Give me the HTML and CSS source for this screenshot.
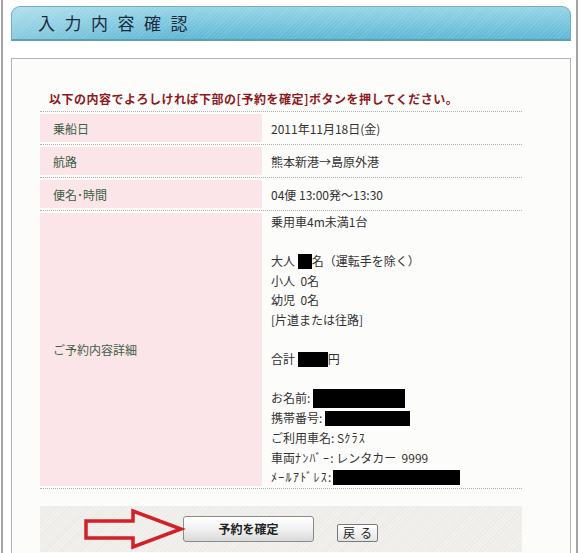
FILE: index.html
```html
<!DOCTYPE html>
<html lang="ja">
<head>
<meta charset="utf-8">
<title>入力内容確認</title>
<link rel="stylesheet" href="styles.css">
</head>
<body>
<div class="frame">
  <h1 class="title-bar">入力内容確認</h1>
  <div class="panel">
    <p class="notice">以下の内容でよろしければ下部の[予約を確定]ボタンを押してください。</p>
    <div class="table">
      <div class="row">
        <div class="lab">乗船日</div>
        <div class="val">2011年11月18日(金)</div>
      </div>
      <div class="row">
        <div class="lab">航路</div>
        <div class="val">熊本新港→島原外港</div>
      </div>
      <div class="row">
        <div class="lab">便名･時間</div>
        <div class="val">04便 13:00発～13:30</div>
      </div>
      <div class="row detail">
        <div class="lab">ご予約内容詳細</div>
        <div class="val lines">
          <div>乗用車4m未満1台</div>
          <div>&nbsp;</div>
          <div>大人 <span class="redact r-adult"></span>名（運転手を除く）</div>
          <div>小人&nbsp; 0名</div>
          <div>幼児&nbsp; 0名</div>
          <div>[片道または往路]</div>
          <div>&nbsp;</div>
          <div>合計 <span class="redact r-total"></span>円</div>
          <div>&nbsp;</div>
          <div>お名前:<span class="redact r-name"></span></div>
          <div>携帯番号:<span class="redact r-tel"></span></div>
          <div>ご利用車名: S<span class="hw">ｸﾗｽ</span></div>
          <div>車両<span class="hw">ﾅﾝﾊﾞｰ</span>: レンタカー&nbsp; 9999</div>
          <div><span class="hw">ﾒｰﾙｱﾄﾞﾚｽ</span>:<span class="redact r-mail"></span></div>
        </div>
      </div>
    </div>
    <div class="actions">
      <button class="btn-main" type="button">予約を確定</button>
      <button class="btn-back" type="button">戻る</button>
      <svg class="arrow" width="104" height="44" viewBox="0 0 104 44">
        <polygon points="3,13 50,13 50,3 98,21 50,39 50,30 3,30" fill="none" stroke="#d41f24" stroke-width="3.5" stroke-linejoin="miter"/>
      </svg>
    </div>
  </div>
</div>
</body>
</html>
```

FILE: styles.css
```css
html, body {
  margin: 0;
  padding: 0;
  background: #ffffff;
}
body {
  font-family: "Noto Sans CJK JP", "Liberation Sans", sans-serif;
  font-size: 12px;
  color: #333;
  overflow: hidden;
}
.frame {
  margin: 0 2px 0 1px;
  border-left: 2px solid #a3a3a3;
  border-right: 2px solid #a3a3a3;
  padding: 6px 5px 0 8px;
  height: 553px;
  box-sizing: border-box;
}
.title-bar {
  margin: 0;
  height: 35px;
  box-sizing: border-box;
  border: 1px solid #74aebe;
  border-bottom: 2px solid #5f9fb2;
  border-radius: 9px 9px 0 0;
  background:
    repeating-linear-gradient(135deg, rgba(255,255,255,0.10) 0 1px, rgba(255,255,255,0) 1px 3px),
    linear-gradient(90deg, rgba(255,255,255,0.25), rgba(255,255,255,0) 30%),
    linear-gradient(180deg, #98d4e6 0%, #7dc8df 45%, #5fb7d4 100%);
  padding-left: 26px;
  font-size: 17px;
  font-weight: normal;
  letter-spacing: 9.5px;
  line-height: 32px;
  color: #1c2a40;
}
.panel {
  position: relative;
  margin-top: 17px;
  border: 1px solid #b4b4b4;
  background: #fcfcfa;
  padding: 32px 48px 0 28px;
  height: 520px;
  box-sizing: border-box;
}
.notice {
  margin: 0 0 4px 9px;
  font-size: 12px;
  line-height: 16px;
  font-weight: bold;
  letter-spacing: 0.5px;
  color: #8c1a1e;
}
.table {
  border-top: 1px dotted #b0b0b0;
}
.row {
  display: grid;
  grid-template-columns: 222px 1fr;
  border-bottom: 1px dotted #b0b0b0;
  padding: 2px 0;
}
.lab {
  background: #fbe5e8;
  height: 28px;
  display: flex;
  align-items: center;
  padding-left: 13px;
  color: #3d5e49;
}
.val {
  display: flex;
  align-items: center;
  padding-left: 9px;
  color: #333;
}
.detail .lab {
  height: auto;
}
.detail .val.lines {
  display: block;
  line-height: 19.6px;
  margin-top: -1px;
  margin-bottom: -1px;
}
.hw {
  letter-spacing: 1.3px;
}
.redact {
  display: inline-block;
  background: #000;
  height: 15px;
  vertical-align: -3px;
}
.r-adult { width: 14px; margin-left: 0; }
.r-total { width: 30px; }
.r-name { width: 92px; height: 19px; vertical-align: -5px; margin-left: 3px; }
.r-tel { width: 85px; margin-left: 3px; }
.r-mail { width: 127px; margin-left: 2px; }
.actions {
  position: relative;
  margin-top: 17px;
  height: 46px;
  display: flex;
  align-items: flex-start;
  padding: 10px 0 0 143px;
  box-sizing: border-box;
  gap: 23px;
  background:
    repeating-linear-gradient(135deg, rgba(0,0,0,0.025) 0 1px, rgba(0,0,0,0) 1px 3px),
    #f1f0ed;
}
.btn-main {
  width: 131px;
  height: 26px;
  border: 1px solid #8a8a8a;
  border-radius: 3px;
  background: linear-gradient(180deg, #ffffff 0%, #f1f1f1 50%, #d9d9d9 100%);
  font-family: "Noto Sans CJK JP", sans-serif;
  font-size: 12px;
  font-weight: bold;
  color: #222;
  padding: 0;
}
.btn-back {
  margin-top: 8px;
  width: 41px;
  height: 18px;
  border: 1px solid #7a7a7a;
  border-radius: 2px;
  background: linear-gradient(180deg, #ffffff, #e4e4e4);
  font-family: "Noto Sans CJK JP", sans-serif;
  font-size: 12px;
  line-height: 14px;
  letter-spacing: 5px;
  text-indent: 5px;
  color: #222;
  padding: 0;
}
.arrow {
  position: absolute;
  left: 43px;
  top: 2px;
}
```
